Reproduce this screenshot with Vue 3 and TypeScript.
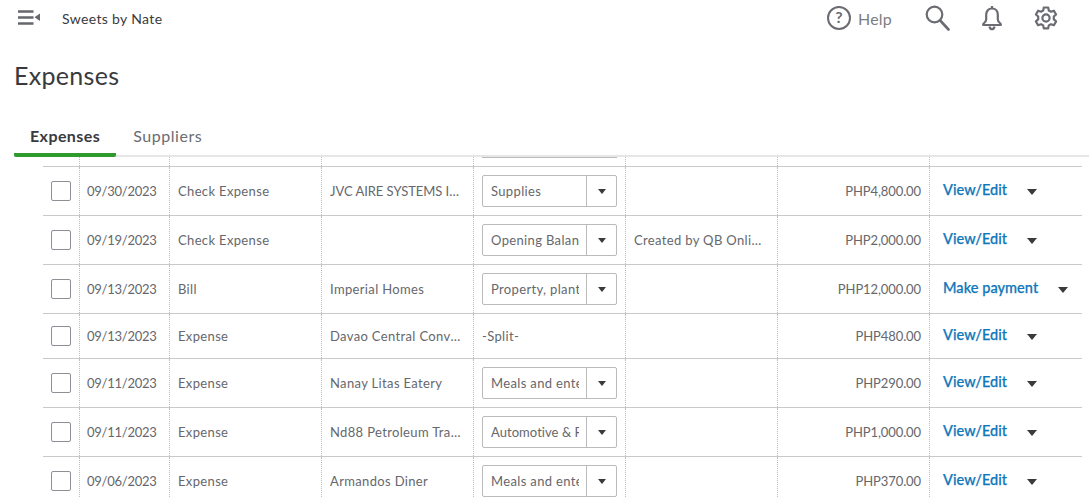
<script setup lang="ts">
interface Row {
  date: string
  type: string
  payee: string
  tight?: boolean
  category?: string
  categoryTight?: boolean
  split?: string
  memo: string
  amount: string
  action: string
  height: number
}
const rows: Row[] = [
  { date: '09/30/2023', type: 'Check Expense', payee: 'JVC AIRE SYSTEMS INC.', tight: true, category: 'Supplies', memo: '', amount: 'PHP4,800.00', action: 'View/Edit', height: 49 },
  { date: '09/19/2023', type: 'Check Expense', payee: '', category: 'Opening Balance Equity', memo: 'Created by QB Online to adjust', amount: 'PHP2,000.00', action: 'View/Edit', height: 49 },
  { date: '09/13/2023', type: 'Bill', payee: 'Imperial Homes', category: 'Property, plant and equipment', memo: '', amount: 'PHP12,000.00', action: 'Make payment', height: 49 },
  { date: '09/13/2023', type: 'Expense', payee: 'Davao Central Convenience', split: '-Split-', memo: '', amount: 'PHP480.00', action: 'View/Edit', height: 45 },
  { date: '09/11/2023', type: 'Expense', payee: 'Nanay Litas Eatery', category: 'Meals and entertainment', memo: '', amount: 'PHP290.00', action: 'View/Edit', height: 49 },
  { date: '09/11/2023', type: 'Expense', payee: 'Nd88 Petroleum Trading', category: 'Automotive & Fuel', categoryTight: true, memo: '', amount: 'PHP1,000.00', action: 'View/Edit', height: 49 },
  { date: '09/06/2023', type: 'Expense', payee: 'Armandos Diner', category: 'Meals and entertainment', memo: '', amount: 'PHP370.00', action: 'View/Edit', height: 49 },
]
</script>

<template>
  <div class="page">
    <header class="topbar">
      <div class="brand">
        <svg class="menu" width="24" height="16" viewBox="0 0 24 16" fill="none">
          <path d="M0 1.500h15.500M0 7.500h15.500M0 13.500h15.500" stroke="#66676c" stroke-width="2.600" />
          <path d="M22 3.500v7.500L16.500 7.300z" fill="#66676c" />
        </svg>
        <span class="company">Sweets by Nate</span>
      </div>
      <div class="tools">
        <button class="help">
          <svg width="26" height="26" viewBox="0 0 26 26" fill="none">
            <circle cx="13" cy="13" r="11" stroke="#6b6c72" stroke-width="2" />
            <text x="13" y="18" text-anchor="middle" class="qm">?</text>
          </svg>
          <span>Help</span>
        </button>
        <svg class="search" width="26" height="26" viewBox="0 0 26 26" fill="none">
          <circle cx="10.500" cy="9.500" r="7.800" stroke="#6b6c72" stroke-width="2.200" />
          <path d="M16.200 15.500l8.300 9" stroke="#6b6c72" stroke-width="2.600" stroke-linecap="round" />
        </svg>
        <svg class="bell" width="22" height="26" viewBox="0 0 22 26" fill="none">
          <path d="M11 3.500c-3.600 0-5.800 2.800-5.800 6.300v4.600c0 2-1.300 3.300-3 4.600v1h17.600v-1c-1.700-1.300-3-2.600-3-4.600V9.800c0-3.500-2.200-6.300-5.800-6.300z" stroke="#6b6c72" stroke-width="2.200" stroke-linejoin="round" />
          <path d="M11 1v2.500M8.500 21.500c.3 1.800 1.200 2.700 2.500 2.700s2.200-.9 2.500-2.700" stroke="#6b6c72" stroke-width="2.200" />
        </svg>
        <svg class="gear" width="24" height="24" viewBox="0 0 24 24" fill="none">
          <path d="M9.800 1.500h4.400l.6 3 2.200 1.200 2.900-1 2.200 3.800-2.300 2v2.900l2.300 2-2.200 3.800-2.900-1-2.200 1.200-.6 3H9.800l-.6-3L7 18.200l-2.900 1-2.200-3.800 2.300-2v-2.900l-2.300-2 2.200-3.800 2.900 1 2.200-1.200z" stroke="#6b6c72" stroke-width="2.200" stroke-linejoin="round" />
          <circle cx="12" cy="12" r="3.600" stroke="#6b6c72" stroke-width="2.200" />
        </svg>
      </div>
    </header>

    <h1 class="title">Expenses</h1>

    <nav class="tabs">
      <a class="tab active">Expenses</a>
      <a class="tab">Suppliers</a>
    </nav>

    <section class="table">
      <div class="row stub">
        <div class="cell"></div>
        <div class="cell"></div>
        <div class="cell"></div>
        <div class="cell"></div>
        <div class="cell"><div class="select-end"></div></div>
        <div class="cell"></div>
        <div class="cell"></div>
        <div class="cell"></div>
      </div>
      <div v-for="(r, i) in rows" :key="i" class="row" :style="{ height: r.height + 'px' }">
        <div class="cell check"><span class="box"></span></div>
        <div class="cell date">{{ r.date }}</div>
        <div class="cell">{{ r.type }}</div>
        <div class="cell"><span class="ellipsis" :class="{ tight: r.tight }">{{ r.payee }}</span></div>
        <div class="cell">
          <div v-if="r.category" class="select">
            <span class="select-text" :class="{ tight: r.categoryTight }">{{ r.category }}</span>
            <span class="select-btn"><i class="caret small"></i></span>
          </div>
          <template v-else>{{ r.split }}</template>
        </div>
        <div class="cell memo"><span class="ellipsis">{{ r.memo }}</span></div>
        <div class="cell amount">{{ r.amount }}</div>
        <div class="cell action">
          <a class="link">{{ r.action }}</a>
          <i class="caret"></i>
        </div>
      </div>
    </section>
  </div>
</template>

<style scoped>
.page {
  width: 1089px;
  height: 498px;
  overflow: hidden;
  background: #fff;
  color: #555;
  font-family: Lato, "Open Sans", sans-serif;
}
.topbar {
  height: 38px;
  display: flex;
  justify-content: space-between;
  align-items: center;
  padding: 0 31px 2px 18px;
  box-sizing: border-box;
}
.brand {
  display: flex;
  align-items: center;
}
.menu {
  margin-right: 20px;
}
.company {
  font-size: 14px;
  color: #393a3d;
  letter-spacing: 0.35px;
}
.tools {
  display: flex;
  align-items: center;
}
.help {
  display: flex;
  align-items: center;
  gap: 6px;
  border: 0;
  background: none;
  padding: 0;
  font: inherit;
  font-size: 16px;
  color: #7c7d82;
  letter-spacing: 0.2px;
  margin-right: 32px;
}
.qm {
  font: bold 16px Lato, sans-serif;
  fill: #6b6c72;
}
.search {
  margin-right: 31px;
}
.bell {
  margin-right: 31px;
}
.title {
  margin: 0;
  padding: 22px 0 0 14px;
  height: 61px;
  box-sizing: border-box;
  font-size: 25px;
  line-height: 30px;
  font-weight: 400;
  color: #393a3d;
  letter-spacing: 0.3px;
}
.tabs {
  height: 58px;
  margin-left: 14px;
  box-sizing: border-box;
  display: flex;
  align-items: flex-end;
  border-bottom: 2px solid #e6e6e6;
}
.tab {
  font-size: 16px;
  line-height: 20px;
  color: #6b6c72;
  letter-spacing: 0.55px;
  padding: 0 16px 7px;
  margin-bottom: -2px;
  border-bottom: 4px solid transparent;
}
.tab.active {
  font-weight: 700;
  color: #393a3d;
  letter-spacing: 0.42px;
  border-bottom-color: #2e9b2c;
  border-radius: 2px;
  margin-right: 1px;
}
.table {
  margin-left: 43px;
  width: 1039px;
}
.row {
  display: grid;
  grid-template-columns: 36px 90px 152px 152px 152px 152px 152px 153px;
  box-sizing: border-box;
  border-top: 1px solid #c9c9c9;
  font-size: 13px;
  letter-spacing: 0.35px;
  color: #66676c;
}
.row.stub {
  height: 9px;
  border-top: 0;
}
.cell {
  display: flex;
  align-items: center;
  min-width: 0;
  box-sizing: border-box;
  padding: 0 8px 1px;
  border-left: 1px dotted #bbb;
  white-space: nowrap;
}
.cell:first-child {
  border-left: 0;
  padding: 0;
}
.date {
  padding-left: 7px;
  letter-spacing: -0.25px;
}
.check {
  padding-left: 8px !important;
}
.box {
  width: 20px;
  height: 20px;
  box-sizing: border-box;
  border: 1px solid #8d9096;
  border-radius: 2px;
}
.select-end {
  align-self: flex-start;
  width: 135px;
  height: 1px;
  background: #bbb;
}
.ellipsis {
  overflow: hidden;
  text-overflow: ellipsis;
}
.ellipsis.tight {
  letter-spacing: -0.05px;
}
.memo {
  padding-right: 13px;
}
.select {
  display: flex;
  width: 135px;
  height: 32px;
  margin-top: 1px;
  box-sizing: border-box;
  border: 1px solid #bbb;
  border-radius: 2px;
}
.select-text {
  flex: 1;
  min-width: 0;
  overflow: hidden;
  margin: 0 7px 0 8px;
  line-height: 30px;
}
.select-text.tight {
  letter-spacing: 0.05px;
}
.select-btn {
  width: 29px;
  flex: none;
  display: flex;
  align-items: center;
  justify-content: center;
  border-left: 1px solid #bbb;
}
.amount {
  justify-content: flex-end;
  letter-spacing: -0.1px;
}
.action {
  padding-left: 13px;
  position: relative;
}
.link {
  font-weight: 500;
  font-size: 14.500px;
  color: #0f77ba;
  letter-spacing: 0.05px;
  margin-top: -2px;
  -webkit-text-stroke: 0.25px #0f77ba;
}
.caret {
  width: 0;
  height: 0;
  border-left: 5.500px solid transparent;
  border-right: 5.500px solid transparent;
  border-top: 6px solid #393a3d;
  margin-left: 20px;
  margin-top: 2px;
}
.caret.small {
  border-left-width: 4.500px;
  border-right-width: 4.500px;
  border-top-width: 5px;
  margin-left: 0;
  margin-top: 0;
}
</style>
